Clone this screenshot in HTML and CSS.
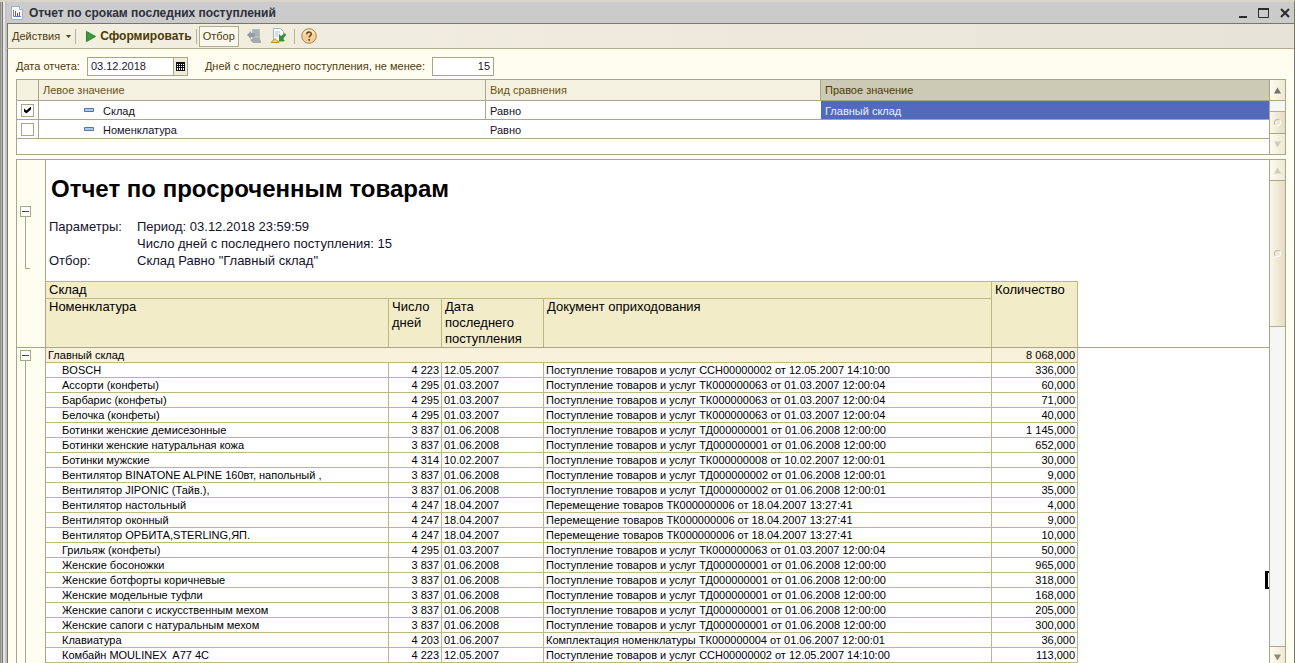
FILE: index.html
```html
<!DOCTYPE html>
<html lang="ru">
<head>
<meta charset="utf-8">
<title>Отчет по срокам последних поступлений</title>
<link rel="stylesheet" href="styles.css">
</head>
<body>
<div class="window">
  <header class="titlebar">
    <svg class="titlebar-icon" width="12" height="14" viewBox="0 0 12 14" aria-hidden="true">
      <path d="M.5.5h8l3 3v10H.5z" fill="#fff" stroke="#9fb0c4"/>
      <path d="M8.500.5v3h3" fill="#dde6f0" stroke="#9fb0c4"/>
      <path d="M2.500 4v6.500h7.500" fill="none" stroke="#5b83b5"/>
      <path d="M4.500 5v5M8.500 6v4" stroke="#c2452b"/>
      <path d="M6.500 7v3" stroke="#7a4a3a"/>
    </svg>
    <h1 class="titlebar-text">Отчет по срокам последних поступлений</h1>
    <div class="window-buttons">
      <button class="window-button" aria-label="Свернуть"><svg width="12" height="12" viewBox="0 0 12 12"><path d="M2 9h8v2H2z" fill="#2b2b2b"/></svg></button>
      <button class="window-button" aria-label="Развернуть"><svg width="12" height="12" viewBox="0 0 12 12"><path d="M.5 1.500h10v9H.5z" fill="none" stroke="#2b2b2b"/><path d="M0 2h11" stroke="#2b2b2b" stroke-width="2"/></svg></button>
      <button class="window-button" aria-label="Закрыть"><svg width="12" height="12" viewBox="0 0 12 12"><path d="M2 2l8 8M10 2l-8 8" stroke="#2b2b2b" stroke-width="2"/></svg></button>
    </div>
  </header>

  <div class="toolbar">
    <button class="tool">Действия
      <svg width="5" height="3" viewBox="0 0 5 3" aria-hidden="true"><path d="M0 0h5L2.500 3z" fill="#4d3b0a"/></svg>
    </button>
    <span class="tool-divider"></span>
    <button class="tool tool-run">
      <svg width="10" height="11" viewBox="0 0 10 11" aria-hidden="true"><path d="M.5.5l9 5-9 5z" fill="#3c9c3c" stroke="#2f7d33"/></svg>
      Сформировать
    </button>
    <span class="tool-divider"></span>
    <button class="tool tool-pressed" aria-pressed="true">Отбор</button>
    <div class="tool-group">
      <button class="tool tool-icon" aria-label="Восстановить настройки">
        <svg width="16" height="16" viewBox="0 0 16 16"><path d="M6 1h8v10H6z" fill="#b9bec1"/><path d="M8 3h5M8 5h5M8 7h5" stroke="#a0a6ab"/><path d="M1 7l4-4v2h4v4H5v2z" fill="#929ca3"/><path d="M4 12l3-2h6l2 3v2H7z" fill="#a3abb0"/></svg>
      </button>
      <button class="tool tool-icon" aria-label="Сохранить настройки">
        <svg width="16" height="16" viewBox="0 0 16 16"><path d="M3.500.5h7l3 3v10h-10z" fill="#fff" stroke="#a4b4c4"/><path d="M5 4h5M5 6h4M5 8h3" stroke="#a9bfd6"/><path d="M15 5l-4 3-2-2v7h6l-2-2 3-4z" fill="#2f9438"/><path d="M1 14.500l4-4 4 4z" fill="#f4cf5b" stroke="#c7962b"/></svg>
      </button>
    </div>
    <span class="tool-divider"></span>
    <button class="tool tool-icon" aria-label="Справка">
      <svg width="16" height="16" viewBox="0 0 16 16"><circle cx="8" cy="8" r="7.300" fill="#f6cf9b" stroke="#a78356"/><path d="M3 6a5.300 5.300 0 0 1 10 0" fill="none" stroke="#fdebcf" stroke-width="1.500"/><path d="M5.800 6.200c0-3 4.500-2.900 4.500-.2 0 1.700-2.200 1.600-2.200 3.600" fill="none" stroke="#6b4314" stroke-width="1.500"/><path d="M7.300 11h1.700v1.700H7.300z" fill="#6b4314"/></svg>
    </button>
  </div>

  <main class="form">
    <div class="params">
      <label for="report-date">Дата отчета:</label>
      <div class="date-field">
        <input id="report-date" class="field-input" type="text" value="03.12.2018">
        <button class="date-button" aria-label="Календарь">
          <svg width="9" height="9" viewBox="0 0 9 9"><path d="M0 0h9v9H0z" fill="#111"/><path d="M1 2h1v1H1zM3 2h1v1H3zM5 2h1v1H5zM7 2h1v1H7zM1 4h1v1H1zM3 4h1v1H3zM5 4h1v1H5zM7 4h1v1H7zM1 6h1v2H1zM3 6h1v2H3zM5 6h1v2H5zM7 6h1v2H7z" fill="#fff"/></svg>
        </button>
      </div>
      <label class="days-label" for="days">Дней с последнего поступления, не менее:</label>
      <input id="days" class="field-input days-input" type="text" value="15">
    </div>

    <section class="panel filter">
      <table class="filter-table">
        <colgroup><col class="f-check"><col class="f-left"><col class="f-kind"><col></colgroup>
        <thead>
          <tr><th></th><th>Левое значение</th><th>Вид сравнения</th><th class="is-current">Правое значение</th></tr>
        </thead>
        <tbody>
          <tr>
            <td><input class="check" type="checkbox" aria-label="Склад" checked></td>
            <td class="filter-name with-edge"><svg width="10" height="4" viewBox="0 0 10 4" aria-hidden="true"><path d="M.5.5h9v3h-9z" fill="#a9c8ea" stroke="#5677a5"/></svg>Склад</td>
            <td>Равно</td>
            <td class="is-selected">Главный склад</td>
          </tr>
          <tr>
            <td><input class="check" type="checkbox" aria-label="Номенклатура"></td>
            <td class="filter-name"><svg width="10" height="4" viewBox="0 0 10 4" aria-hidden="true"><path d="M.5.5h9v3h-9z" fill="#a9c8ea" stroke="#5677a5"/></svg>Номенклатура</td>
            <td>Равно</td>
            <td></td>
          </tr>
        </tbody>
      </table>
      <div class="scroll">
        <button class="scroll-button" aria-label="Вверх"><svg width="7" height="7" viewBox="0 0 8 7"><path d="M0 7h8L4 0z" fill="#74736b"/></svg></button>
        <div class="scroll-track"><div class="scroll-thumb filter-thumb"></div></div>
        <button class="scroll-button" aria-label="Вниз"><svg width="7" height="7" viewBox="0 0 8 7"><path d="M0 0h8L4 7z" fill="#cfccbd"/></svg></button>
      </div>
    </section>

    <section class="panel report">
      <div class="sheet">
        <div class="band band-head">
          <div class="outline outline-head">
            <button class="fold" aria-label="Свернуть группу"></button>
            <span class="fold-line"></span>
          </div>
          <div class="band-content">
            <h2 class="report-title">Отчет по просроченным товарам</h2>
            <dl class="report-params">
              <dt>Параметры:</dt><dd>Период: 03.12.2018 23:59:59</dd>
              <dd>Число дней с последнего поступления: 15</dd>
              <dt>Отбор:</dt><dd>Склад Равно "Главный склад"</dd>
            </dl>
            <table class="data data-head">
              <colgroup><col class="c-name"><col class="c-days"><col class="c-date"><col class="c-doc"><col class="c-qty"></colgroup>
              <thead>
                <tr class="head-first"><th colspan="4">Склад</th><th rowspan="2">Количество</th></tr>
                <tr class="head-second"><th>Номенклатура</th><th>Число дней</th><th>Дата последнего поступления</th><th>Документ оприходования</th></tr>
              </thead>
            </table>
          </div>
        </div>
        <div class="band band-body">
          <div class="outline outline-body">
            <button class="fold" aria-label="Свернуть группу"></button>
            <span class="fold-line"></span>
          </div>
          <div class="band-content">
            <table class="data data-body">
              <colgroup><col class="c-name"><col class="c-days"><col class="c-date"><col class="c-doc"><col class="c-qty"></colgroup>
              <tbody>
                <tr class="group"><td colspan="4">Главный склад</td><td>8 068,000</td></tr>
                <tr><td>BOSCH</td><td>4 223</td><td>12.05.2007</td><td>Поступление товаров и услуг ССН00000002 от 12.05.2007 14:10:00</td><td>336,000</td></tr>
                <tr><td>Ассорти (конфеты)</td><td>4 295</td><td>01.03.2007</td><td>Поступление товаров и услуг ТК000000063 от 01.03.2007 12:00:04</td><td>60,000</td></tr>
                <tr><td>Барбарис (конфеты)</td><td>4 295</td><td>01.03.2007</td><td>Поступление товаров и услуг ТК000000063 от 01.03.2007 12:00:04</td><td>71,000</td></tr>
                <tr><td>Белочка (конфеты)</td><td>4 295</td><td>01.03.2007</td><td>Поступление товаров и услуг ТК000000063 от 01.03.2007 12:00:04</td><td>40,000</td></tr>
                <tr><td>Ботинки женские демисезонные</td><td>3 837</td><td>01.06.2008</td><td>Поступление товаров и услуг ТД000000001 от 01.06.2008 12:00:00</td><td>1 145,000</td></tr>
                <tr><td>Ботинки женские натуральная кожа</td><td>3 837</td><td>01.06.2008</td><td>Поступление товаров и услуг ТД000000001 от 01.06.2008 12:00:00</td><td>652,000</td></tr>
                <tr><td>Ботинки мужские</td><td>4 314</td><td>10.02.2007</td><td>Поступление товаров и услуг ТК000000008 от 10.02.2007 12:00:01</td><td>30,000</td></tr>
                <tr><td>Вентилятор BINATONE ALPINE 160вт, напольный ,</td><td>3 837</td><td>01.06.2008</td><td>Поступление товаров и услуг ТД000000002 от 01.06.2008 12:00:01</td><td>9,000</td></tr>
                <tr><td>Вентилятор JIPONIC (Тайв.),</td><td>3 837</td><td>01.06.2008</td><td>Поступление товаров и услуг ТД000000002 от 01.06.2008 12:00:01</td><td>35,000</td></tr>
                <tr><td>Вентилятор настольный</td><td>4 247</td><td>18.04.2007</td><td>Перемещение товаров ТК000000006 от 18.04.2007 13:27:41</td><td>4,000</td></tr>
                <tr><td>Вентилятор оконный</td><td>4 247</td><td>18.04.2007</td><td>Перемещение товаров ТК000000006 от 18.04.2007 13:27:41</td><td>9,000</td></tr>
                <tr><td>Вентилятор ОРБИТА,STERLING,ЯП.</td><td>4 247</td><td>18.04.2007</td><td>Перемещение товаров ТК000000006 от 18.04.2007 13:27:41</td><td>10,000</td></tr>
                <tr><td>Грильяж (конфеты)</td><td>4 295</td><td>01.03.2007</td><td>Поступление товаров и услуг ТК000000063 от 01.03.2007 12:00:04</td><td>50,000</td></tr>
                <tr><td>Женские босоножки</td><td>3 837</td><td>01.06.2008</td><td>Поступление товаров и услуг ТД000000001 от 01.06.2008 12:00:00</td><td>965,000</td></tr>
                <tr><td>Женские ботфорты коричневые</td><td>3 837</td><td>01.06.2008</td><td>Поступление товаров и услуг ТД000000001 от 01.06.2008 12:00:00</td><td>318,000</td></tr>
                <tr><td>Женские модельные туфли</td><td>3 837</td><td>01.06.2008</td><td>Поступление товаров и услуг ТД000000001 от 01.06.2008 12:00:00</td><td>168,000</td></tr>
                <tr><td>Женские сапоги с искусственным мехом</td><td>3 837</td><td>01.06.2008</td><td>Поступление товаров и услуг ТД000000001 от 01.06.2008 12:00:00</td><td>205,000</td></tr>
                <tr><td>Женские сапоги с натуральным мехом</td><td>3 837</td><td>01.06.2008</td><td>Поступление товаров и услуг ТД000000001 от 01.06.2008 12:00:00</td><td>300,000</td></tr>
                <tr><td>Клавиатура</td><td>4 203</td><td>01.06.2007</td><td>Комплектация номенклатуры ТК000000004 от 01.06.2007 12:00:01</td><td>36,000</td></tr>
                <tr><td>Комбайн MOULINEX  A77 4C</td><td>4 223</td><td>12.05.2007</td><td>Поступление товаров и услуг ССН00000002 от 12.05.2007 14:10:00</td><td>113,000</td></tr>
              </tbody>
            </table>
          </div>
          <span class="cell-cursor"></span>
        </div>
      </div>
      <div class="scroll">
        <button class="scroll-button" aria-label="Вверх"><svg width="7" height="7" viewBox="0 0 8 7"><path d="M0 7h8L4 0z" fill="#cfccbd"/></svg></button>
        <div class="scroll-track"><div class="scroll-thumb report-thumb"></div></div>
        <button class="scroll-button" aria-label="Вниз"><svg width="7" height="7" viewBox="0 0 8 7"><path d="M0 0h8L4 7z" fill="#8b887c"/></svg></button>
      </div>
    </section>
  </main>
</div>
</body>
</html>
```
FILE: styles.css
```css
* {
  box-sizing: border-box;
}

body {
  margin: 0;
  font: 11px/14px "Liberation Sans", Arial, sans-serif;
  color: #4d3b0a;
  background: #cbcbcb;
}

button,
input {
  margin: 0;
  padding: 0;
  border: 0;
  border-radius: 0;
  font: inherit;
  color: inherit;
  background: none;
}

svg {
  flex: none;
  display: block;
}

.window {
  display: flex;
  flex-direction: column;
  height: 100vh;
  overflow: hidden;
  padding-left: 7px;
  border-top: 2px solid #d8d5c8;
  border-right: 1px solid #77766f;
  background: linear-gradient(to right, #8f8f8d 0 1px, #b9b8b4 1px 2px, #77766f 2px 3px, #e6e6e6 3px 5px, #c4c4c4 5px 7px, #cbcbcb 7px);
}

.titlebar {
  flex: none;
  display: flex;
  align-items: center;
  gap: 6px;
  height: 21px;
  padding: 0 3px 0 4px;
  background: #cbcbcb;
}

.titlebar-text {
  flex: 1;
  margin: 0;
  font: bold 12px/14px "Liberation Sans", Arial, sans-serif;
  color: #2d2f3c;
}

.window-buttons {
  display: flex;
  gap: 9px;
}

.window-button {
  width: 12px;
  height: 12px;
}

.toolbar {
  flex: none;
  display: flex;
  align-items: center;
  height: 26px;
  padding-left: 4px;
  border: solid #77766f;
  border-width: 1px 0 0 1px;
  border-bottom: 1px solid #b3ac90;
  background: linear-gradient(to right, #f4f0e0, #e8e3d8);
}

.tool {
  display: flex;
  align-items: center;
  gap: 6px;
  height: 21px;
}

.tool-run {
  gap: 4px;
  margin-left: 8px;
  font: bold 12px/14px "Liberation Sans", Arial, sans-serif;
  color: #4a3a00;
}

.tool-pressed {
  padding: 0 3px;
  border: 1px solid #b3ac90;
  background: #faf7ec;
}

.tool-group {
  display: flex;
  margin-left: 3px;
}

.tool-icon {
  justify-content: center;
  width: 24px;
}

.tool-divider {
  width: 1px;
  height: 15px;
  margin: 0 2px 0 4px;
  background: #b9b297;
}

.form {
  flex: 1;
  display: flex;
  flex-direction: column;
  min-height: 0;
  padding: 7px 8px 0;
  border-left: 1px solid #77766f;
  background: #fffdf0;
}

.params {
  display: flex;
  align-items: center;
  height: 20px;
  margin-bottom: 3px;
}

.date-field {
  display: flex;
  width: 101px;
  height: 19px;
  margin-left: 7px;
  border: 1px solid #a9a78a;
  background: #fff;
}

.field-input {
  flex: 1;
  min-width: 0;
  padding: 0 3px;
  color: #1d1a33;
}

.date-button {
  display: flex;
  align-items: center;
  justify-content: center;
  width: 14px;
  border-left: 1px solid #a9a78a;
  background: #f1ecda;
}

.days-label {
  margin: 0 7px 0 17px;
}

.days-input {
  flex: none;
  width: 62px;
  height: 19px;
  border: 1px solid #a9a78a;
  text-align: right;
  background: #fff;
}

.panel {
  display: flex;
  border: 1px solid #a9a78a;
  background: #fff;
}

.filter {
  flex: none;
  align-items: stretch;
  height: 76px;
  margin-bottom: 4px;
}

.filter-table {
  flex: 1;
  align-self: flex-start;
  width: 0;
  border-collapse: separate;
  border-spacing: 0;
  table-layout: fixed;
}

.f-check { width: 22px; }
.f-left { width: 447px; }
.f-kind { width: 335px; }

.filter-table th {
  height: 21px;
  padding: 0 0 0 4px;
  border-right: 1px solid #a9a78a;
  border-bottom: 1px solid #a9a78a;
  font-weight: normal;
  text-align: left;
  color: #6a5114;
  background: #f5f1e0;
}

.filter-table th:last-child {
  border-right: 0;
}

.filter-table .is-current {
  color: #4d3b0a;
  background: #cccab4;
}

.filter-table td {
  height: 19px;
  padding: 2px 0 0 4px;
  border-bottom: 1px solid #a9a78a;
  color: #15122b;
}

.filter-table td:first-child,
.filter-table .with-edge {
  border-right: 1px solid #a9a78a;
}

.filter-table td:first-child {
  padding-top: 0;
}

.filter-table .filter-name {
  padding-left: 45px;
}

.filter-name svg {
  display: inline-block;
  margin-right: 9px;
  vertical-align: 3px;
}

.filter-table .is-selected {
  color: #eef1ff;
  background: #5269bd;
}

.check {
  appearance: none;
  display: block;
  width: 13px;
  height: 13px;
  border: 1px solid #a9a78a;
  background: #fff;
}

.check:checked::before {
  content: "";
  display: block;
  width: 7px;
  height: 7px;
  margin: 2px;
  background: #000;
  clip-path: polygon(0 28%, 33% 58%, 100% 0, 100% 42%, 33% 100%, 0 72%);
}

.scroll {
  flex: none;
  display: flex;
  flex-direction: column;
  width: 16px;
  border-left: 1px solid #a9a78a;
  background: #f6f6f4;
}

.scroll-button {
  flex: none;
  display: flex;
  align-items: center;
  justify-content: center;
  height: 20px;
  background: linear-gradient(to right, #fdfbf0, #efe9d4);
}

.scroll-track {
  flex: 1;
  display: flex;
  flex-direction: column;
  min-height: 0;
  border: solid #a9a78a;
  border-width: 1px 0;
}

.scroll-thumb {
  display: flex;
  align-items: center;
  justify-content: center;
  border: solid #b5ae93;
  border-width: 0 0 1px;
  background: linear-gradient(to right, #fbf7ea, #e6dbc2);
}

.scroll-thumb::before {
  content: "";
  width: 5px;
  height: 5px;
  border: 1px solid #c4baa1;
  border-right-color: #fff;
  border-bottom-color: #fff;
  border-radius: 50%;
}

.filter-thumb {
  height: 22px;
  margin-top: auto;
  border-width: 1px 0 0;
}

.report-thumb {
  height: 146px;
}

.report {
  flex: 1;
  min-height: 0;
  margin-bottom: -4px;
  border-bottom: 0;
}

.sheet {
  flex: 1;
  display: flex;
  flex-direction: column;
  min-width: 0;
  overflow: hidden;
}

.band {
  display: flex;
}

.band-head {
  flex: none;
  border-bottom: 1px solid #a9a78a;
}

.band-body {
  position: relative;
  flex: 1;
  min-height: 0;
}

.outline {
  flex: none;
  display: flex;
  flex-direction: column;
  align-items: center;
  width: 29px;
  padding: 2px 11px 0 0;
  border-right: 1px solid #a9a78a;
  background: #fffdf0;
}

.outline-head {
  padding-top: 46px;
}

.fold {
  display: flex;
  align-items: center;
  justify-content: center;
  width: 11px;
  height: 11px;
  border: 1px solid #a9a78a;
  background: #fff;
}

.fold::before {
  content: "";
  width: 7px;
  height: 1px;
  background: #4d4a38;
}

.fold-line {
  width: 5px;
  margin-left: 4px;
  border-left: 1px solid #a9a78a;
}

.outline-head .fold-line {
  height: 52px;
  border-bottom: 1px solid #a9a78a;
}

.outline-body .fold-line {
  flex: 1;
}

.band-content {
  flex: 1;
  min-width: 0;
  color: #000;
}

.report-title {
  margin: 0;
  padding: 15px 0 0 5px;
  font-size: 24px;
  line-height: 28px;
}

.report-params {
  display: grid;
  grid-template-columns: 88px 1fr;
  grid-auto-rows: 17px;
  margin: 15px 0 12px;
  padding-left: 3px;
  font-size: 13px;
  line-height: 17px;
  color: #15122b;
}

.report-params dt {
  grid-column: 1;
}

.report-params dd {
  grid-column: 2;
  margin: 0;
}

.data {
  width: 1032px;
  border-collapse: separate;
  border-spacing: 0;
  table-layout: fixed;
}

.c-name { width: 343px; }
.c-days { width: 53px; }
.c-date { width: 102px; }
.c-doc { width: 448px; }
.c-qty { width: 86px; }

.data th {
  padding: 0 3px;
  border: solid #bdb782;
  border-width: 1px 1px 0 0;
  font-size: 13px;
  font-weight: normal;
  line-height: 16px;
  text-align: left;
  vertical-align: top;
  background: #f3ecc8;
}

.head-first {
  height: 17px;
}

.head-second {
  height: 49px;
}

.data td {
  height: 15px;
  padding: 0 2px;
  border: solid #bdb782;
  border-width: 0 1px 1px 0;
  line-height: 14px;
  white-space: pre;
}

.data td:first-child {
  padding-left: 16px;
}

.data td:nth-child(2),
.data td:last-child {
  text-align: right;
}

.data .group td {
  background: #f9f1dc;
}

.data .group td:first-child {
  padding-left: 2px;
}

.cell-cursor {
  position: absolute;
  right: 0;
  top: 223px;
  width: 4px;
  height: 18px;
  border: solid #000;
  border-width: 2px 0 2px 3px;
}
```
